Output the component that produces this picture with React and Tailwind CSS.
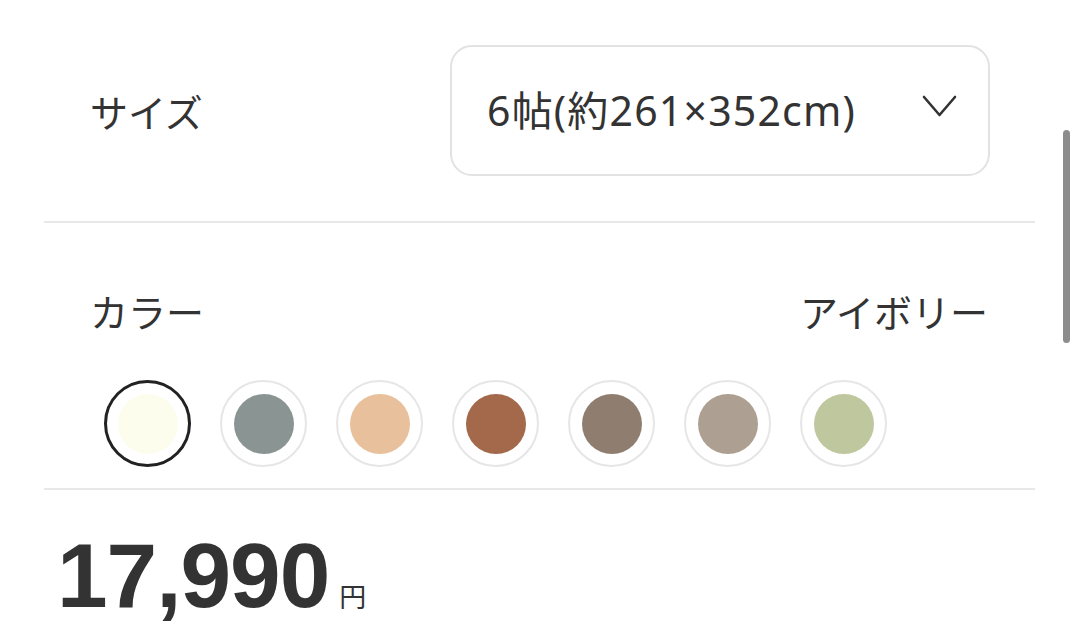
import React, { useState } from 'react';

const colors = [
    { name: 'アイボリー', hex: '#fdfdee' },
    { name: 'グレー', hex: '#8a9593' },
    { name: 'ベージュ', hex: '#e8c09b' },
    { name: 'ブラウン', hex: '#a4694a' },
    { name: 'モカ', hex: '#8f7e6f' },
    { name: 'グレージュ', hex: '#ada092' },
    { name: 'グリーン', hex: '#bec79d' },
];

const App = () => {
    const [selected, setSelected] = useState(0);

    return (
        <div className="relative w-[1080px] h-[627px] overflow-hidden bg-white text-[#333] font-['Noto_Sans_CJK_JP',sans-serif]">
            <div className="ml-[44px] w-[991px]">
                <div className="h-[221px] flex items-center justify-between pl-[46px] pr-[45px]">
                    <span className="text-[38px] leading-none">サイズ</span>
                    <button className="w-[540px] h-[131px] border-2 border-[#e2e2e2] rounded-[22px] flex items-center justify-between pl-[35px] pr-[31px]">
                        <span className="text-[41px] leading-none tracking-[1.2px] font-['Noto_Sans','Noto_Sans_CJK_JP',sans-serif]">6帖(約261×352cm)</span>
                        <svg className="w-[35px] h-[24px] mb-[10px]" viewBox="0 0 35 24" fill="none" stroke="#333" strokeWidth="2.6" strokeLinecap="round" strokeLinejoin="round">
                            <path d="M2 3 L17.5 21 L33 3" />
                        </svg>
                    </button>
                </div>
                <div className="h-[2px] bg-[#e8e8e8]" />
                <div className="h-[265px] pl-[46px] pr-[47px] pt-[69px]">
                    <div className="flex items-center justify-between">
                        <span className="text-[38px] leading-none">カラー</span>
                        <span className="text-[38px] leading-none">{colors[selected].name}</span>
                    </div>
                    <div className="flex gap-[29px] mt-[50px] ml-[14px]">
                        {colors.map((c, i) => (
                            <button
                                key={c.hex}
                                onClick={() => setSelected(i)}
                                className={`w-[87px] h-[87px] rounded-full flex items-center justify-center ${i === selected ? 'border-[3px] border-[#222]' : 'border-2 border-[#e6e6e6]'}`}
                            >
                                <span className="block w-[60px] h-[60px] rounded-full" style={{ backgroundColor: c.hex }} />
                            </button>
                        ))}
                    </div>
                </div>
                <div className="h-[2px] bg-[#e8e8e8]" />
                <div className="flex items-baseline pl-[13px] pt-[40px]">
                    <span className="text-[91px] leading-none font-bold font-['Liberation_Sans',sans-serif] tracking-[-1px]">17,990</span>
                    <span className="text-[27px] leading-none ml-[10px]">円</span>
                </div>
            </div>
            <div className="absolute left-[1063px] top-[130px] w-[7px] h-[213px] rounded-full bg-[#8c8c8c]" />
        </div>
    );
};

export default App;
